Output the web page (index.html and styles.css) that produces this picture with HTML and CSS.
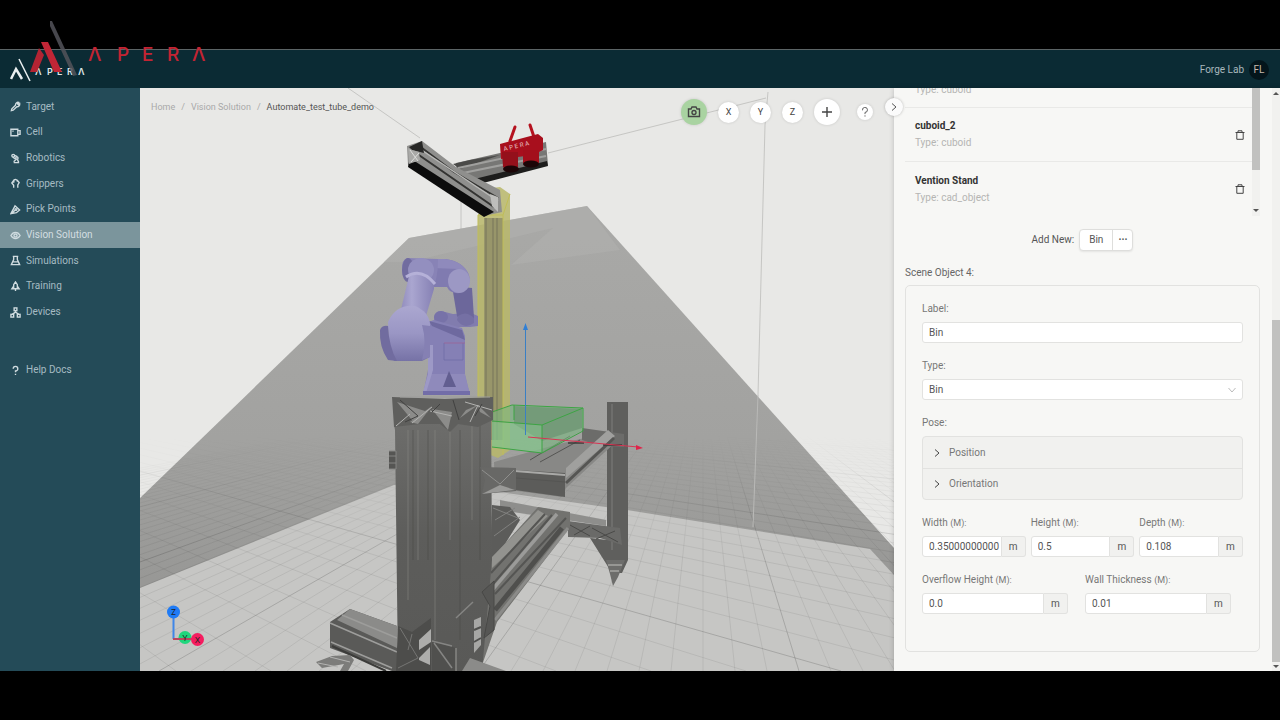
FILE: index.html
```html
<!DOCTYPE html>
<html lang="en">
<head>
    <meta charset="UTF-8">
    <meta name="viewport" content="width=device-width, initial-scale=1.0">
    <title>Apera - Vision Solution</title>
    <link rel="stylesheet" href="styles.css">
</head>
<body>

    <!-- Big logo over the top left corner -->
    <svg class="watermark" viewBox="0 0 180 60" role="img" aria-label="APERA">
        <path d="M11 21H18L32 51H24Z" fill="#c02636"/>
        <path d="M0 51L9 27L14 34L7 51Z" fill="#b32433"/>
        <path d="M20 0L22 0L47 54L43 55L20 5Z" fill="#53545a" opacity="0.85"/>
        <text x="58 87 112 137 162" y="40" class="watermark-text">ΛPERΛ</text>
    </svg>

    <div class="app">
        <header class="topbar">
            <svg class="logo" width="76" height="26" viewBox="0 0 76 26" role="img" aria-label="APERA">
                <path d="M1 22L6 12L12 22" fill="none" stroke="#e9eff0" stroke-width="2.500"/>
                <path d="M9 2L20 24" fill="none" stroke="#e9eff0" stroke-width="1.500"/>
                <text x="25 37 47 57 68" y="18" class="logo-text">ΛPERΛ</text>
            </svg>
            <div class="user">
                <span>Forge Lab</span>
                <span class="avatar">FL</span>
            </div>
        </header>

        <div class="body">
            <nav class="sidebar">
                <ul class="menu">
                    <li><a href="#"><svg class="icon" viewBox="0 0 12 12"><path d="M1.500 10.500L2 8.500L6 4.500A2.800 2.800 0 0 1 9.500 1.500L8.300 3.200L9 4L10.600 3A2.800 2.800 0 0 1 7.500 6.200L3.500 10Z"/></svg>Target</a></li>
                    <li><a href="#"><svg class="icon" viewBox="0 0 12 12"><path d="M1 2.500H8.500V9.500H1ZM8.500 4L11 4V8L8.500 8M2.500 4.500H4"/></svg>Cell</a></li>
                    <li><a href="#"><svg class="icon" viewBox="0 0 12 12"><circle cx="3.500" cy="3" r="1.500"/><circle cx="7.500" cy="5.500" r="1.300"/><path d="M5 2.500L8 4M3 4.500L6 6.500M6.500 7L4 9.500M4 10.500H10M8 7L9.500 10"/></svg>Robotics</a></li>
                    <li><a href="#"><svg class="icon" viewBox="0 0 12 12"><path d="M4 10.500V8L2 5.500L4.500 2L6 1.500L8 2.500L10 5L8.500 7.500V10.500M4.500 2L4 5M8 2.500V4"/></svg>Grippers</a></li>
                    <li><a href="#"><svg class="icon" viewBox="0 0 12 12"><path d="M1 10.500L5.500 2L10.500 6.500L7 9.500Z M1 10.500L6 6.500"/><circle cx="6.500" cy="6" r="1"/></svg>Pick Points</a></li>
                    <li><a href="#" class="active"><svg class="icon" viewBox="0 0 12 12"><path d="M1 6C3.500 1.500 8.500 1.500 11 6C8.500 10.500 3.500 10.500 1 6Z"/><circle cx="6" cy="6" r="1.700"/></svg>Vision Solution</a></li>
                    <li><a href="#"><svg class="icon" viewBox="0 0 12 12"><path d="M3 1.500H9M4 1.500V5L1.500 10.500H10.500L8 5V1.500M3 7.500H9"/></svg>Simulations</a></li>
                    <li><a href="#"><svg class="icon" viewBox="0 0 12 12"><path d="M4 8.500V4L6 1L8 4V8.500ZM4 5.500L2 8.500H4M8 5.500L10 8.500H8M6 8.500V11"/></svg>Training</a></li>
                    <li><a href="#"><svg class="icon" viewBox="0 0 12 12"><rect x="4.500" y="1" width="3" height="3"/><rect x="1" y="8" width="3" height="3"/><rect x="8" y="8" width="3" height="3"/><path d="M6 4V5.500L2.500 8M6 5.500L9.500 8"/></svg>Devices</a></li>
                </ul>
                <a href="#" class="help"><svg class="icon" viewBox="0 0 12 12"><path d="M3.500 4A2.500 2.500 0 1 1 6 6.500V8M6 9.500V11"/></svg>Help Docs</a>
            </nav>

            <main class="viewport">
                <!-- 3D scene -->
                <svg class="scene" viewBox="140 88 754 583" preserveAspectRatio="xMidYMid slice">
                    <defs>
                        <linearGradient id="wall" x1="0" y1="0" x2="0" y2="1">
                            <stop offset="0" stop-color="#a9a9a7"/>
                            <stop offset="0.5" stop-color="#a2a2a0"/>
                            <stop offset="0.8" stop-color="#989896"/>
                        </linearGradient>
                        <linearGradient id="column" x1="0" y1="0" x2="0" y2="1">
                            <stop offset="0" stop-color="#70706e"/>
                            <stop offset="0.5" stop-color="#5d5d5b"/>
                            <stop offset="1" stop-color="#595957"/>
                        </linearGradient>
                        <linearGradient id="robot" x1="0" y1="0" x2="0" y2="1">
                            <stop offset="0" stop-color="#aba7d0"/>
                            <stop offset="0.500" stop-color="#9a96c4"/>
                            <stop offset="1" stop-color="#7672a6"/>
                        </linearGradient>
                        <linearGradient id="robotSide" x1="0" y1="0" x2="1" y2="0">
                            <stop offset="0" stop-color="#8984b6"/>
                            <stop offset="0.400" stop-color="#aaa6d0"/>
                            <stop offset="1" stop-color="#8681b4"/>
                        </linearGradient>
                        <linearGradient id="fade" x1="0" y1="0" x2="0" y2="1">
                            <stop offset="0" stop-color="#000"/>
                            <stop offset="0.550" stop-color="#fff"/>
                        </linearGradient>
                        <mask id="floorMask" maskUnits="userSpaceOnUse" x="140" y="435" width="754" height="236">
                            <rect x="140" y="435" width="754" height="236" fill="url(#fade)"/>
                        </mask>
                    </defs>

                    <rect x="140" y="88" width="754" height="583" fill="#e8e8e6"/>
                    <path d="M348 88L420 138M548 153L766 98M768 92L765 125L758 395M461 200V258" fill="none" stroke="#bcbcba" stroke-width="0.800"/>

                    <!-- shaded wall and floor -->
                    <path d="M140 498L409 238L587 206L894 548V671H140Z" fill="url(#wall)"/>
                    <path d="M409 238L587 206L620 250L511 265L553 228L409 262L384 262Z" fill="#b2b2b0" opacity="0.500"/>
                    <path d="M140 588L394 485L500 492L627 510L870 549L894 575V671H140Z" fill="#c6c6c4"/>
                    <g id="floorGrid" mask="url(#floorMask)"></g>
                    <path d="M758 395L753 527" stroke="#b9b9b7" stroke-width="1"/>

                    <!-- yellow post -->
                    <path d="M478 215L492 188L500 187L510 194V450L498 458L478 450Z" fill="#b9b76a" opacity="0.850"/>
                    <path d="M484 218H503V440H484Z" fill="#98966a"/>
                    <path d="M486 218V440M493 218V440M497 218V440" stroke="#77755a" stroke-width="1"/>
                    <path d="M478 215H503L510 194M503 215V455M478 215V450" fill="none" stroke="#c0bd58" stroke-width="1"/>

                    <!-- top rails -->
                    <path d="M456 163L500 153L546 142L548 165L458 188Z" fill="#777775"/>
                    <path d="M453 164L470 160L500 155L460 169Z" fill="#4a4a48"/>
                    <path d="M458 168L546 149M458 174L546 156" stroke="#a0a09e" stroke-width="2"/>
                    <path d="M458 183L547 161L548 166L460 189Z" fill="#1d1d1c"/>
                    <path d="M407 146L422 141L456 167L500 190L502 212L484 216L408 165Z" fill="#8f8f8d"/>
                    <path d="M409 162L416 162L494 212L484 217L408 167Z" fill="#0c0c0c"/>
                    <path d="M418 145L454 172L498 198M416 153L494 207" fill="none" stroke="#333331" stroke-width="2"/>
                    <path d="M420 149L498 201" stroke="#b9b9b7" stroke-width="1.500"/>
                    <path d="M409 147L422 141L424 153L412 150Z" fill="#272726"/>
                    <path d="M408 148L412 150L419 152L420 160L409 164Z" fill="#a9a9a7"/>
                    <path d="M410 150L418 161M419 153L411 162" stroke="#dededc" stroke-width="1"/>
                    <path d="M490 194L498 197V212L492 206Z" fill="#bebebc"/>

                    <!-- camera -->
                    <path d="M510 141L515 127M535 140L530 125" stroke="#b5121f" stroke-width="3" stroke-linecap="round"/>
                    <path d="M500 144L538 134L543 138V150L533 155L501 159Z" fill="#a80f1d"/>
                    <path d="M502 152H518V167Q510 174 503 167Z" fill="#94101b"/>
                    <path d="M523 150H539V163Q531 170 523 163Z" fill="#a30f1b"/>
                    <ellipse cx="511" cy="169" rx="8" ry="3.500" fill="#1c0507"/>
                    <ellipse cx="531" cy="164" rx="8" ry="3.500" fill="#1c0507"/>
                    <text x="504" y="151" transform="rotate(-13 504 151)" class="camera-text">A P E R A</text>

                    <!-- robot: wrist and forearm -->
                    <path d="M434 320Q434 311 441 311L453 314L471 313L478 316V326L470 327H440Q434 326 434 320Z" fill="#817cae"/>
                    <path d="M452 286L472 288L474 318Q464 326 457 316Z" fill="#6c679b"/>
                    <ellipse cx="441" cy="317" rx="7" ry="6" fill="#7772a8"/>
                    <path d="M458 316Q466 310 474 318V323Q464 330 457 320Z" fill="#7570a4"/>
                    <path d="M430 259H445Q463 261 469 275Q472 288 460 293Q450 294 447 287H430Z" fill="#807bb0"/>
                    <path d="M433 259H445Q463 261 469 275L459 269L433 268Z" fill="#8f8abc"/>
                    <ellipse cx="459" cy="281" rx="11" ry="12" fill="#9c98c4"/>
                    <!-- robot: elbow and upper arm -->
                    <path d="M407 258L438 259Q438 280 432 290L412 284Q402 280 402 268Q402 260 407 258Z" fill="#8883b6"/>
                    <ellipse cx="408" cy="270" rx="6" ry="12" fill="#716c9f"/>
                    <ellipse cx="421" cy="270" rx="13" ry="12" fill="#938fbf"/>
                    <path d="M409 276Q423 268 434 281V289L423 326H397Z" fill="url(#robotSide)"/>
                    <path d="M406 277Q421 267 435 284" fill="none" stroke="#b5b1d8" stroke-width="3"/>
                    <!-- robot: base -->
                    <path d="M428 322L434 320L462 328L465 336V375L470 395H423L428 370Z" fill="#8580b5"/>
                    <path d="M428 374H465L470 395H423Z" fill="#8f8abb"/>
                    <path d="M428 345V374L423 392L426 393L433 370V345Z" fill="#9d99c6"/>
                    <path d="M423 391H470V395H423Z" fill="#726da8"/>
                    <path d="M429 321L462 330L465 340L432 326Z" fill="#6e699f"/>
                    <path d="M449 371L456 387H443Z" fill="#625e90"/>
                    <path d="M444 343V360H463V343" fill="none" stroke="#6f6aa4" stroke-width="0.700"/>
                    <path d="M444 343H465" stroke="#a0608f" stroke-width="0.700"/>
                    <!-- robot: shoulder -->
                    <path d="M388 322Q396 304 415 306Q429 312 430 324V357L422 361H394L389 350Z" fill="url(#robot)"/>
                    <path d="M422 325Q427 342 422 360L430 357V326Z" fill="#8580b3"/>
                    <path d="M380 330Q382 325 388 326Q389 347 397 361L388 360Q379 347 380 330Z" fill="#716c9f"/>

                    <!-- right leg and lower rails -->
                    <path d="M607 402H628V560L622 573H612L590 538L607 540Z" fill="#5f5f5d"/>
                    <path d="M612 404V550" stroke="#6e6e6c" stroke-width="2"/>
                    <path d="M606 560H625L618 577L613 586L610 574Z" fill="#6d6d6b"/>
                    <path d="M608 565H622M610 571H619" stroke="#a5a5a3" stroke-width="1.500"/>
                    <path d="M500 500L606 520V526L500 510Z" fill="#8e8e8c"/>
                    <path d="M492 505L510 507L520 520L495 560H490Z" fill="#5c5c5a"/>
                    <path d="M493 508L518 518M495 520L515 508M494 536L520 517" stroke="#81817f" stroke-width="1"/>
                    <path d="M568 521L620 528L622 545L600 538L568 537Z" fill="#6a6a68"/>
                    <path d="M570 525L590 536M590 526L574 535M592 528L618 542M615 531L596 539" stroke="#4a4a48" stroke-width="1"/>
                    <path d="M538 507L570 512V527L497 622L480 671H465L490 560Z" fill="#72726f"/>
                    <path d="M538 510L491 558L492 568L548 516Z" fill="#93938f"/>
                    <path d="M545 514L491 573M552 515L493 584M566 518L495 594" stroke="#555553" stroke-width="2"/>
                    <path d="M557 514L493 589" stroke="#9b9b99" stroke-width="3.500"/>
                    <path d="M562 528L495 610" stroke="#4f4f4d" stroke-width="5"/>
                    <path d="M568 528L495 620" stroke="#8b8b89" stroke-width="3"/>

                    <!-- table -->
                    <path d="M494 462L555 445L610 432L618 440L566 488L562 497L495 488Z" fill="#888886"/>
                    <path d="M582 428L624 434V447L600 446L582 440Z" fill="#6c6c6a"/>
                    <path d="M608 430L615 436L566 478V468Z" fill="#a0a09e"/>
                    <path d="M614 438L566 483" stroke="#555553" stroke-width="3"/>
                    <path d="M515 470L565 473V497L515 490Z" fill="#5c5c5a"/>
                    <path d="M515 471L565 475" stroke="#a9a9a7" stroke-width="2"/>
                    <path d="M516 478L565 482M540 462L580 440M530 460L570 436" stroke="#555553" stroke-width="1"/>
                    <path d="M568 443H584M603 445H622" stroke="#3c3c3a" stroke-width="1.500"/>

                    <!-- bin -->
                    <path d="M492 413L512 405L583 408V430L542 453L492 447Z" fill="#78b57e" opacity="0.600"/>
                    <path d="M514 406L582 409V428L542 441L514 424Z" fill="#5b8561" opacity="0.450"/>
                    <path d="M492 422L542 425V453L492 447Z" fill="#8fd095" opacity="0.400"/>
                    <path d="M492 412L512 405L583 408L542 425L492 421M583 408V431L542 453V425M542 453L492 447M514 405V420" fill="none" stroke="#3da444" stroke-width="1"/>

                    <!-- move handles -->
                    <path d="M525.500 435V328" stroke="#3a7fc4" stroke-width="1"/>
                    <path d="M523 330L525.500 323L528 330Z" fill="#2f7fd6"/>
                    <path d="M528 437L638 447" stroke="#d93352" stroke-width="1"/>
                    <path d="M636 445L643 448L636 450Z" fill="#e0234a"/>

                    <!-- column -->
                    <path d="M394 425L395 400H491L492 560L482 671H398L395 430Z" fill="url(#column)"/>
                    <path d="M389 451H396V469H389M389 456H396M389 463H396" fill="#555553" stroke="#858583" stroke-width="1"/>
                    <path d="M408 430V600M418 430V560M435 430V640M450 430V540M472 425V520" stroke="#8a8a88" stroke-width="2" opacity="0.250"/>
                    <path d="M413 430V560M428 430V560M460 430V640M480 425V560" stroke="#40403e" stroke-width="2" opacity="0.200"/>
                    <path d="M392 397L445 399L493 397V420L478 427L458 424L450 432L440 424L420 424L394 427Z" fill="#5f5f5d"/>
                    <path d="M397 402L428 412L412 420ZM432 409L448 430L452 412ZM432 406L418 424L410 422ZM460 418L478 405L466 410ZM478 405L491 418L480 412Z" fill="#8c8c8a"/>
                    <path d="M432 407L412 423M430 411L452 416M478 405L470 422M465 402L492 410M396 426L410 414" fill="none" stroke="#b3b3b1" stroke-width="1"/>
                    <path d="M400 400L418 416L405 422M440 404L432 412M482 404L475 416M453 400L459 420" fill="none" stroke="#414140" stroke-width="1"/>
                    <path d="M400 397H490" stroke="#9d9d9b" stroke-width="1"/>
                    <path d="M480 467L516 468V491L482 494L485 480Z" fill="#686866"/>
                    <path d="M482 494L500 485L515 490Z" fill="#9a9a98"/>
                    <path d="M482 470L500 484L514 470" fill="none" stroke="#8f8f8d" stroke-width="1"/>

                    <!-- bottom rails -->
                    <path d="M330 622L350 609L397 626V671H392L330 648Z" fill="#5a5a58"/>
                    <path d="M337 620L350 609L397 626V648Z" fill="#8b8b89"/>
                    <path d="M330 623L397 652M331 642L392 668M342 615L397 638" stroke="#9d9d9b" stroke-width="1.500"/>
                    <path d="M332 646L386 671" stroke="#3c3c3a" stroke-width="2"/>
                    <path d="M316 662L332 656L350 655L354 660L348 671H340L344 664L322 668Z" fill="#7c7c7a"/>
                    <path d="M318 663L338 667M330 657L350 662" stroke="#b3b3b1" stroke-width="1"/>
                    <path d="M398 626L412 632L431 618V671H396Z" fill="#4d4d4b"/>
                    <path d="M400 628L418 658L398 668M412 634L408 650" fill="none" stroke="#757573" stroke-width="1"/>
                    <path d="M419 640L431 629V642L419 650ZM419 658L430 647V665L419 660Z" fill="#adadab"/>
                    <path d="M432 641L456 648V671H432Z" fill="#50504e"/>
                    <path d="M434 643L452 668M456 648V671M432 641L452 646M456 618L473 602" fill="none" stroke="#858583" stroke-width="1.500"/>
                    <path d="M474 620L481 617V645L474 653Z" fill="#a7a7a5"/>
                    <path d="M474 630L481 627M474 642L481 638" stroke="#50504e" stroke-width="2"/>
                    <path d="M482 592L494 581V630L484 638L490 606Z" fill="#565654" stroke="#484846" stroke-width="1"/>
                    <path d="M470 658L506 671H462Z" fill="#8b8b89"/>

                    <!-- axis gizmo -->
                    <path d="M173.500 612V639" stroke="#3f86e8" stroke-width="2"/>
                    <circle cx="185" cy="637.500" r="6.500" fill="#1fd67c"/>
                    <path d="M173 639H197" stroke="#b9475f" stroke-width="2"/>
                    <circle cx="173.500" cy="612" r="6.500" fill="#1f7bf5"/>
                    <circle cx="197.500" cy="639.500" r="6.500" fill="#f51c5f"/>
                    <text x="173.500" y="615" class="axis-text">Z</text>
                    <text x="185" y="640.500" class="axis-text">Y</text>
                    <text x="197.500" y="642.500" class="axis-text">X</text>
                </svg>

                <div class="overlay">
                    <div class="breadcrumb">
                        <a href="#">Home</a><span>/</span><a href="#">Vision Solution</a><span>/</span><strong>Automate_test_tube_demo</strong>
                    </div>
                    <div class="tools">
                        <button class="tool big green" aria-label="Camera">
                            <svg width="14" height="14" viewBox="0 0 14 14"><path d="M1.500 4H4L5 2H9L10 4H12.500V11.500H1.500Z"/><circle cx="7" cy="7.500" r="2"/></svg>
                        </button>
                        <button class="tool">X</button>
                        <button class="tool">Y</button>
                        <button class="tool">Z</button>
                        <button class="tool big" aria-label="Add">
                            <svg width="12" height="12" viewBox="0 0 12 12"><path d="M6 1V11M1 6H11"/></svg>
                        </button>
                        <button class="tool small" aria-label="Help">
                            <svg width="10" height="10" viewBox="0 0 12 12"><path d="M3 4A3 3 0 1 1 6 6.500V8.500M6 10V11.500"/></svg>
                        </button>
                    </div>
                </div>
            </main>

            <aside class="panel">
                <button class="collapse-btn" aria-label="Collapse panel">
                    <svg width="8" height="8" viewBox="0 0 8 8"><path d="M2 0.500L6 4L2 7.500"/></svg>
                </button>

                <div class="panel-content">
                    <div class="objects">
                        <ul class="object-list">
                            <li class="cut"><p>Type: cuboid</p></li>
                            <li>
                                <div><b>cuboid_2</b><p>Type: cuboid</p></div>
                                <button class="delete" aria-label="Delete cuboid_2"><svg width="10" height="10" viewBox="0 0 10 10"><path d="M0.500 2.500H9.500M3 2.500V0.800H7V2.500M1.800 2.500V9.300H8.200V2.500"/></svg></button>
                            </li>
                            <li>
                                <div><b>Vention Stand</b><p>Type: cad_object</p></div>
                                <button class="delete" aria-label="Delete Vention Stand"><svg width="10" height="10" viewBox="0 0 10 10"><path d="M0.500 2.500H9.500M3 2.500V0.800H7V2.500M1.800 2.500V9.300H8.200V2.500"/></svg></button>
                            </li>
                        </ul>
                        <div class="list-scroll">
                            <div class="thumb"></div>
                            <i class="arrow down"></i>
                        </div>
                    </div>

                    <div class="add-new">
                        <span>Add New:</span>
                        <div class="btn-group">
                            <button>Bin</button><button class="more" aria-label="More types">···</button>
                        </div>
                    </div>

                    <h3>Scene Object 4:</h3>

                    <form class="card">
                        <div class="field">
                            <label for="label">Label:</label>
                            <input type="text" id="label" value="Bin">
                        </div>
                        <div class="field">
                            <label for="type">Type:</label>
                            <div class="select">
                                <select id="type"><option>Bin</option></select>
                                <svg width="8" height="8" viewBox="0 0 8 8"><path d="M0.500 2L4 6L7.500 2"/></svg>
                            </div>
                        </div>
                        <div class="field">
                            <span class="caption">Pose:</span>
                            <div class="collapse">
                                <button type="button"><svg width="8" height="8" viewBox="0 0 8 8"><path d="M2 0.500L6 4L2 7.500"/></svg>Position</button>
                                <button type="button"><svg width="8" height="8" viewBox="0 0 8 8"><path d="M2 0.500L6 4L2 7.500"/></svg>Orientation</button>
                            </div>
                        </div>
                        <div class="row">
                            <div class="field">
                                <label for="width">Width <small>(M):</small></label>
                                <div class="unit"><input type="text" id="width" value="0.35000000000"><span>m</span></div>
                            </div>
                            <div class="field">
                                <label for="height">Height <small>(M):</small></label>
                                <div class="unit"><input type="text" id="height" value="0.5"><span>m</span></div>
                            </div>
                            <div class="field">
                                <label for="depth">Depth <small>(M):</small></label>
                                <div class="unit"><input type="text" id="depth" value="0.108"><span>m</span></div>
                            </div>
                        </div>
                        <div class="row two">
                            <div class="field">
                                <label for="overflow">Overflow Height <small>(M):</small></label>
                                <div class="unit"><input type="text" id="overflow" value="0.0"><span>m</span></div>
                            </div>
                            <div class="field">
                                <label for="wallThickness">Wall Thickness <small>(M):</small></label>
                                <div class="unit"><input type="text" id="wallThickness" value="0.01"><span>m</span></div>
                            </div>
                        </div>
                    </form>
                </div>

                <div class="page-scroll">
                    <i class="arrow up"></i>
                    <div class="thumb"></div>
                    <i class="arrow down"></i>
                </div>
            </aside>
        </div>
    </div>

    <script src="script.js"></script>
</body>
</html>
```
FILE: script.js
```js
// Floor grid: two sets of lines, each running to its own vanishing point
const floorGrid = document.getElementById('floorGrid');

function addLine(x1, y1, x2, y2, bold) {
    const line = document.createElementNS('http://www.w3.org/2000/svg', 'line');
    line.setAttribute('x1', x1);
    line.setAttribute('y1', y1);
    line.setAttribute('x2', x2);
    line.setAttribute('y2', y2);
    line.setAttribute('class', bold ? 'grid-line bold' : 'grid-line');
    floorGrid.appendChild(line);
}

for (let i = -50; i < 22; i++) {
    addLine(703, 358, 703 + i * 32, 671, (i + 50) % 10 === 3);
}

for (let i = 0; i < 44; i++) {
    addLine(-250, 360, 81 + i * 95, 671, i % 10 === 8);
}
```
FILE: styles.css
```css
* {
    box-sizing: border-box;
}

body {
    margin: 0;
    min-height: 100vh;
    display: flex;
    flex-direction: column;
    padding: 49px 0;
    background-color: #000;
    font-family: Roboto, "Liberation Sans", sans-serif;
    font-size: 10px;
    line-height: 16px;
    color: #555;
}

button, input, select {
    font: inherit;
    color: inherit;
}

button {
    padding: 0;
    border: none;
    cursor: pointer;
}

a {
    color: inherit;
    text-decoration: none;
}

ul {
    list-style: none;
    margin: 0;
    padding: 0;
}

svg {
    flex: none;
    fill: none;
    stroke: currentColor;
}

svg text {
    stroke: none;
    font-family: Inter, "Liberation Sans", sans-serif;
}

/* Logo that lies over the top bar */
.watermark {
    position: absolute;
    top: 21px;
    left: 30px;
    width: 180px;
    height: 60px;
    z-index: 5;
    stroke: none;
}

.watermark path {
    stroke: none;
}

.watermark-text {
    font-size: 19px;
    font-weight: 500;
    fill: #c32433;
}

.app {
    flex: 1;
    display: flex;
    flex-direction: column;
    border-top: 1px solid #5c6466;
}

.topbar {
    height: 38px;
    display: flex;
    align-items: center;
    justify-content: space-between;
    padding: 2px 11px 0 10px;
    background-color: #0b2b34;
    color: #a9b8bd;
}

.logo-text {
    font-size: 9px;
    font-weight: 600;
    fill: #dfe7e9;
}

.user {
    display: flex;
    align-items: center;
    gap: 5px;
}

.avatar {
    width: 20px;
    height: 20px;
    border-radius: 50%;
    background-color: #04151b;
    color: #c9b9ad;
    line-height: 20px;
    text-align: center;
}

.body {
    flex: 1;
    display: flex;
}

/* Left menu */
.sidebar {
    width: 140px;
    padding-top: 6px;
    background-color: #244b58;
    color: #a6bbc3;
}

.menu {
    display: grid;
    grid-auto-rows: 1fr;
    min-height: 231px;
}

.menu a,
.help {
    height: 100%;
    display: flex;
    align-items: center;
    gap: 5px;
    padding: 0 10px;
}

.menu .active {
    background-color: #7b959c;
    color: #d3dee1;
}

.help {
    height: 26px;
    margin-top: 32px;
}

.icon {
    width: 11px;
    height: 11px;
    color: #d0dce0;
    stroke-width: 1.5;
}

/* Scene */
.viewport {
    flex: 1;
    min-width: 0;
    display: grid;
    background-color: #e8e8e6;
}

.scene,
.overlay {
    grid-area: 1 / 1;
}

.scene {
    width: 100%;
    height: 100%;
    min-height: 0;
    stroke: none;
}

.grid-line {
    stroke: #000;
    stroke-width: 1;
    opacity: 0.07;
}

.grid-line.bold {
    opacity: 0.16;
}

.camera-text {
    font-size: 6px;
    fill: #e8c3c6;
}

.axis-text {
    font-size: 8px;
    text-anchor: middle;
    fill: #222;
}

.overlay {
    z-index: 1;
    display: flex;
    justify-content: space-between;
    align-items: flex-start;
    padding: 11px 21px 0 11px;
}

.breadcrumb {
    display: flex;
    font-size: 9px;
    color: #a9a9a9;
}

.breadcrumb span {
    margin: 0 6px;
}

.breadcrumb strong {
    font-weight: 400;
    color: #555;
}

.tools {
    display: flex;
    align-items: center;
    gap: 11px;
}

.tool {
    width: 21px;
    height: 21px;
    display: flex;
    align-items: center;
    justify-content: center;
    border-radius: 50%;
    background-color: #fff;
    box-shadow: 0 0 3px rgba(0, 0, 0, 0.15);
    font-size: 9px;
    color: #444;
}

.tool.big {
    width: 26px;
    height: 26px;
}

.tool.small {
    width: 16px;
    height: 16px;
    margin-left: 6px;
}

.tool.big svg {
    stroke-width: 1.4;
}

.tool.green {
    background-color: #a9d3a1;
}

/* Right panel */
.panel {
    position: relative;
    width: 386px;
    display: flex;
    background-color: #f7f7f5;
    box-shadow: 0 0 5px rgba(0, 0, 0, 0.2);
    z-index: 2;
}

.collapse-btn {
    position: absolute;
    top: 10px;
    left: -9px;
    width: 18px;
    height: 18px;
    display: flex;
    align-items: center;
    justify-content: center;
    border-radius: 50%;
    background-color: #fbfbfb;
    box-shadow: 0 0 3px rgba(0, 0, 0, 0.25);
}

.panel-content {
    flex: 1;
    min-width: 0;
    padding: 0 12px 0 11px;
}

.objects {
    display: flex;
    height: 128px;
}

.object-list {
    flex: 1;
    display: flex;
    flex-direction: column;
    justify-content: flex-end;
    overflow: hidden;
}

.object-list li {
    flex: none;
    height: 54px;
    display: flex;
    align-items: center;
    justify-content: space-between;
    padding: 0 7px 0 10px;
    border-bottom: 1px solid #e9e9e7;
}

.object-list .cut {
    height: auto;
    padding-bottom: 9px;
}

.object-list li:last-child {
    border-bottom: none;
}

.object-list b {
    color: #333;
}

.object-list p {
    margin: 1px 0 0;
    color: #b5b5b3;
}

.delete {
    display: flex;
    background: none;
    color: #444;
}

.list-scroll,
.page-scroll {
    width: 8px;
    display: flex;
    flex-direction: column;
    align-items: center;
    background-color: #f1f1ef;
}

.thumb {
    width: 100%;
    background-color: #c1c1bf;
}

.list-scroll {
    justify-content: space-between;
    padding-bottom: 4px;
}

.list-scroll .thumb {
    height: 82px;
}

.page-scroll {
    padding: 4px 0 3px;
}

.page-scroll .thumb {
    height: 342px;
    margin: auto 0 3px;
}

.arrow {
    border: 3px solid transparent;
}

.arrow.up {
    border-top: none;
    border-bottom-color: #555;
}

.arrow.down {
    border-bottom: none;
    border-top-color: #555;
}

.add-new {
    display: flex;
    align-items: center;
    justify-content: center;
    gap: 5px;
    margin-top: 13px;
}

.btn-group {
    display: flex;
    border: 1px solid #dededc;
    border-radius: 4px;
    background-color: #fff;
    box-shadow: 0 1px 2px rgba(0, 0, 0, 0.08);
}

.btn-group button {
    height: 20px;
    padding: 0 9px;
    background: none;
}

.btn-group .more {
    padding: 0 5px;
    border-left: 1px solid #dededc;
    font-weight: 700;
}

h3 {
    margin: 14px 0 4px;
    font-size: 10px;
    font-weight: 400;
    color: #666;
}

.card {
    padding: 15px 16px 37px;
    border: 1px solid #e2e2e0;
    border-radius: 5px;
    display: flex;
    flex-direction: column;
    gap: 15px;
}

.field {
    min-width: 0;
    display: flex;
    flex-direction: column;
    gap: 5px;
}

.field label,
.caption {
    white-space: nowrap;
    color: #777;
}

.field small {
    font-size: 9px;
}

.field input,
.select select {
    width: 100%;
    min-width: 0;
    height: 21px;
    padding: 0 0 0 6px;
    border: 1px solid #e2e2e0;
    border-radius: 3px;
    background-color: #fff;
    outline: none;
}

.select {
    display: grid;
    align-items: center;
}

.select select,
.select svg {
    grid-area: 1 / 1;
}

.select select {
    appearance: none;
}

.select svg {
    justify-self: end;
    margin-right: 7px;
    color: #bbb;
    pointer-events: none;
}

.collapse {
    border: 1px solid #e2e2e0;
    border-radius: 4px;
    background-color: #f1f1ef;
}

.collapse button {
    width: 100%;
    height: 31px;
    display: flex;
    align-items: center;
    gap: 8px;
    padding: 0 10px;
    background: none;
    color: #777;
}

.collapse button + button {
    border-top: 1px solid #e2e2e0;
}

.collapse svg {
    color: #444;
}

.row {
    display: grid;
    grid-template-columns: repeat(3, 1fr);
    gap: 5px;
}

.row.two {
    grid-template-columns: repeat(2, 1fr);
    gap: 17px;
    padding-right: 12px;
}

.unit {
    display: flex;
}

.unit input {
    flex: 1;
    border-radius: 3px 0 0 3px;
}

.unit span {
    width: 24px;
    height: 21px;
    border: 1px solid #e2e2e0;
    border-left: none;
    border-radius: 0 3px 3px 0;
    background-color: #f1f1ef;
    line-height: 19px;
    text-align: center;
}
```
